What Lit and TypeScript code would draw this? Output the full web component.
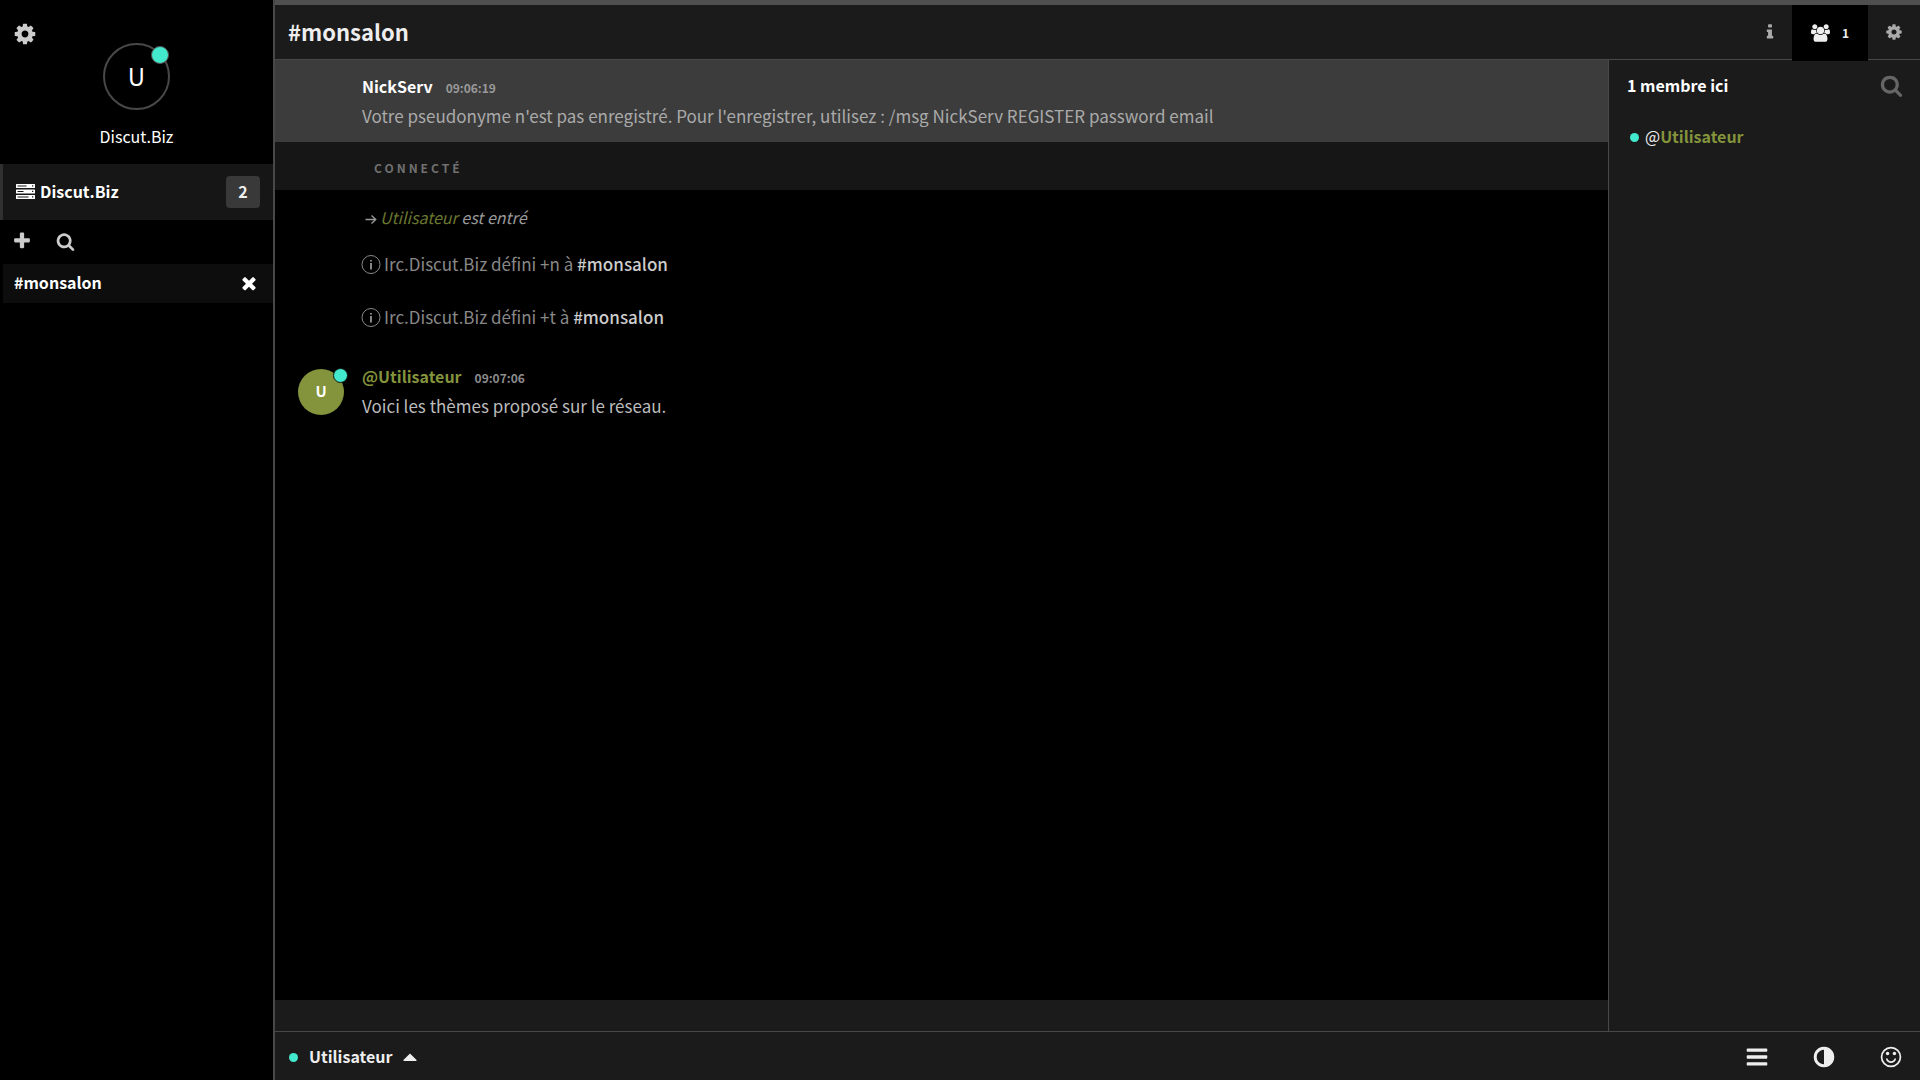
import { LitElement, html, svg, css, nothing } from "lit";
import { customElement, property } from "lit/decorators.js";

interface Glyph {
  box: string;
  ratio: number;
  body: unknown;
}

const square = "0 0 1792 1792";

const glyphs: Record<string, Glyph> = {
  cog: {
    box: square,
    ratio: 1,
    body: svg`<path d="M1152 896q0-106-75-181t-181-75-181 75-75 181 75 181 181 75 181-75 75-181zm512-109v222q0 12-8 23t-20 13l-185 28q-19 54-39 91 35 50 107 138 10 12 10 25t-9 23q-27 37-99 108t-94 71q-12 0-26-9l-138-108q-44 23-91 38-16 136-29 186-7 28-36 28h-222q-14 0-24.500-8.500t-11.500-21.500l-28-184q-49-16-90-37l-141 107q-10 9-25 9-14 0-25-11-126-114-165-168-7-10-7-23 0-12 8-23 15-21 51-66.500t54-70.500q-27-50-41-99l-183-27q-13-2-21-12.500t-8-23.500v-222q0-12 8-23t19-13l186-28q14-46 39-92-40-57-107-138-10-12-10-24 0-10 9-23 26-36 98.500-107.500t94.500-71.500q13 0 26 10l138 107q44-23 91-38 16-136 29-186 7-28 36-28h222q14 0 24.500 8.500t11.500 21.500l28 184q49 16 90 37l142-107q9-9 24-9 13 0 25 10 129 119 165 170 7 8 7 22 0 12-8 23-15 21-51 66.500t-54 70.500q26 50 41 98l183 28q13 2 21 12.500t8 23.500z"/>`,
  },
  search: {
    box: square,
    ratio: 1,
    body: svg`<path d="M1216 832q0-185-131.500-316.500t-316.500-131.500-316.500 131.500-131.500 316.500 131.500 316.500 316.500 131.500 316.500-131.500 131.500-316.500zm512 832q0 52-38 90t-90 38q-54 0-90-38l-343-342q-179 124-399 124-143 0-273.500-55.500t-225-150-150-225-55.500-273.500 55.500-273.500 150-225 225-150 273.500-55.500 273.500 55.500 225 150 150 225 55.500 273.500q0 220-124 399l343 343q37 37 37 90z"/>`,
  },
  plus: {
    box: square,
    ratio: 1,
    body: svg`<path d="M1600 736v192q0 40-28 68t-68 28h-416v416q0 40-28 68t-68 28h-192q-40 0-68-28t-28-68v-416h-416q-40 0-68-28t-28-68v-192q0-40 28-68t68-28h416v-416q0-40 28-68t68-28h192q40 0 68 28t28 68v416h416q40 0 68 28t28 68z"/>`,
  },
  times: {
    box: square,
    ratio: 1,
    body: svg`<path d="M1490 1322q0 40-28 68l-136 136q-28 28-68 28t-68-28l-294-294-294 294q-28 28-68 28t-68-28l-136-136q-28-28-28-68t28-68l294-294-294-294q-28-28-28-68t28-68l136-136q28-28 68-28t68 28l294 294 294-294q28-28 68-28t68 28l136 136q28 28 28 68t-28 68l-294 294 294 294q28 28 28 68z"/>`,
  },
  info: {
    box: square,
    ratio: 1,
    body: svg`<path d="M1216 1344v128q0 26-19 45t-45 19h-512q-26 0-45-19t-19-45v-128q0-26 19-45t45-19h64v-384h-64q-26 0-45-19t-19-45v-128q0-26 19-45t45-19h384q26 0 45 19t19 45v576h64q26 0 45 19t19 45zm-128-1152v192q0 26-19 45t-45 19h-256q-26 0-45-19t-19-45v-192q0-26 19-45t45-19h256q26 0 45 19t19 45z"/>`,
  },
  bars: {
    box: square,
    ratio: 1,
    body: svg`<path d="M1664 1344v128q0 26-19 45t-45 19h-1408q-26 0-45-19t-19-45v-128q0-26 19-45t45-19h1408q26 0 45 19t19 45zm0-512v128q0 26-19 45t-45 19h-1408q-26 0-45-19t-19-45v-128q0-26 19-45t45-19h1408q26 0 45 19t19 45zm0-512v128q0 26-19 45t-45 19h-1408q-26 0-45-19t-19-45v-128q0-26 19-45t45-19h1408q26 0 45 19t19 45z"/>`,
  },
  adjust: {
    box: square,
    ratio: 1,
    body: svg`<path d="M896 1440v-1088q-148 0-273 73t-198 198-73 273 73 273 198 198 273 73zm768-544q0 209-103 385.500t-279.500 279.500-385.500 103-385.500-103-279.500-279.500-103-385.500 103-385.500 279.500-279.500 385.500-103 385.500 103 279.500 279.500 103 385.500z"/>`,
  },
  smile: {
    box: square,
    ratio: 1,
    body: svg`<circle cx="896" cy="896" r="704" fill="none" stroke="currentColor" stroke-width="128"/><circle cx="640" cy="640" r="128"/><circle cx="1152" cy="640" r="128"/><path d="M1262 1075q-37 121-138 195t-228 74-228-74-138-195q-8-25 4-48.500t38-31.500q25-8 48.500 4t31.500 38q25 80 92.500 129.500t151.500 49.500 151.500-49.500 92.500-129.500q8-26 32-38t49-4 37 31.500 4 48.500z"/>`,
  },
  group: {
    box: "64 0 1920 1792",
    ratio: 1.0714,
    body: svg`<path d="M657 896q-162 5-265 128h-134q-82 0-138-40.500t-56-118.500q0-353 124-353 6 0 43.500 21t97.500 42.500 119 21.500q67 0 133-23-5 37-5 66 0 139 81 256zm1071 637q0 120-73 189.500t-194 69.500h-874q-121 0-194-69.500t-73-189.500q0-53 3.500-103.500t14-109 26.500-108.500 43-97.500 62-81 85.500-53.500 111.500-20q10 0 43 21.500t73 48 107 48 135 21.500 135-21.500 107-48 73-48 43-21.500q61 0 111.500 20t85.500 53.500 62 81 43 97.500 26.500 108.500 14 109 3.500 103.500zm-1024-1277q0 106-75 181t-181 75-181-75-75-181 75-181 181-75 181 75 75 181zm704 384q0 159-112.500 271.500t-271.500 112.500-271.500-112.500-112.500-271.500 112.500-271.500 271.500-112.500 271.500 112.500 112.500 271.500zm576 225q0 78-56 118.500t-138 40.500h-134q-103-123-265-128 81-117 81-256 0-29-5-66 66 23 133 23 59 0 119-21.500t97.500-42.500 43.500-21q124 0 124 353zm-128-609q0 106-75 181t-181 75-181-75-75-181 75-181 181-75 181 75 75 181z"/>`,
  },
  server: {
    box: "0 0 19 15",
    ratio: 1.2667,
    body: svg`<path fill-rule="evenodd" d="M.5 0h18q.5 0 .5.5v3q0 .5-.5.5H.5Q0 4 0 3.500v-3Q0 0 .5 0zM1.500 1.500v1h9v-1zM16 1.300v1.300h1.300V1.300zM.5 5.500h18q.5 0 .5.5v3q0 .5-.5.5H.5Q0 9.500 0 9V6q0-.5.5-.5zM1.500 7v1h6V7zM16 6.800v1.300h1.300V6.800zM.5 11h18q.5 0 .5.5v3q0 .5-.5.5H.5q-.5 0-.5-.5v-3q0-.5.5-.5zM1.500 12.500v1h11v-1zM16 12.300v1.300h1.300v-1.300z"/>`,
  },
  caret: {
    box: "0 0 14 8",
    ratio: 1.75,
    body: svg`<path d="M7 .4 13.600 7q.4.8-.6.9H1Q0 7.800.4 7z"/>`,
  },
  notice: {
    box: "0 0 20 20",
    ratio: 1,
    body: svg`<circle cx="10" cy="9.500" r="9" fill="none" stroke="currentColor" stroke-width="1"/><path d="M9 5h2v1.500H9zM9 8h2v6.500H9z"/>`,
  },
  arrow: {
    box: "0 0 12 12",
    ratio: 1,
    body: svg`<path d="M.5 7.500h10.500M6.500 3.500 10.800 7.500l-4.300 4" fill="none" stroke="currentColor" stroke-width="1.300"/>`,
  },
};

const icon = (name: string, height: number) => {
  const g = glyphs[name];
  return html`<svg
    viewBox=${g.box}
    width=${Math.round(height * g.ratio)}
    height=${height}
    fill="currentColor"
    aria-hidden="true"
  >${g.body}</svg>`;
};

const shared = css`
  :host {
    box-sizing: border-box;
  }
  *,
  *::before,
  *::after {
    box-sizing: border-box;
  }
  svg {
    display: block;
    flex: none;
  }
  button {
    display: flex;
    align-items: center;
    justify-content: center;
    margin: 0;
    padding: 0;
    border: 0;
    background: none;
    color: inherit;
    font: inherit;
    cursor: pointer;
  }
  a {
    color: inherit;
    text-decoration: none;
  }
  .label {
    padding-bottom: 2px;
  }
  .presence {
    flex: none;
    width: 9px;
    height: 9px;
    border-radius: 50%;
    background: #42e9cc;
  }
`;

@customElement("chat-sidebar")
export class ChatSidebar extends LitElement {
  static styles = [
    shared,
    css`
      :host {
        display: flex;
        flex-direction: column;
        width: 275px;
        flex: none;
        background: #000;
        border-right: 2px solid #484848;
      }
      .profile {
        position: relative;
        display: flex;
        flex-direction: column;
        align-items: center;
        gap: 15px;
        padding: 43px 0 16px;
        color: #fff;
      }
      .settings {
        position: absolute;
        left: 13px;
        top: 22px;
        color: #ccc;
      }
      .avatar {
        position: relative;
        display: flex;
        align-items: center;
        justify-content: center;
        width: 67px;
        height: 67px;
        border: 2px solid #484848;
        border-radius: 50%;
        font-size: 24px;
        line-height: 24px;
      }
      .status {
        position: absolute;
        right: -1px;
        top: 1px;
        width: 18px;
        height: 18px;
        border: 1px solid #555;
        border-radius: 50%;
        background: #42e9cc;
      }
      .identity {
        line-height: 23px;
      }
      .network {
        display: flex;
        align-items: center;
        gap: 5px;
        height: 56px;
        padding: 0 13px;
        border-left: 3px solid #303030;
        background: #161616;
        color: #fff;
        font-weight: 700;
      }
      .network svg {
        margin-bottom: 2px;
      }
      .network-name {
        flex: 1;
      }
      .count {
        display: grid;
        place-items: center;
        width: 34px;
        height: 32px;
        padding-bottom: 2px;
        border-radius: 4px;
        background: #393939;
        color: #eee;
      }
      .tools {
        display: flex;
        align-items: center;
        gap: 24px;
        height: 44px;
        padding: 0 12px 2px;
        color: #ccc;
      }
      .channel {
        display: flex;
        align-items: center;
        justify-content: space-between;
        height: 39px;
        margin-left: 3px;
        padding: 0 14px 2px 11px;
        background: #0d0d0d;
        color: #fff;
        font-weight: 700;
      }
    `,
  ];

  render() {
    return html`
      <div class="profile">
        <button class="settings" aria-label="Paramètres">${icon("cog", 24)}</button>
        <div class="avatar"><span class="label">U</span><span class="status"></span></div>
        <div class="identity">Discut.Biz</div>
      </div>
      <div class="network">
        ${icon("server", 15)}
        <a class="network-name label" href="#reseau">Discut.Biz</a>
        <span class="count">2</span>
      </div>
      <div class="tools">
        <button aria-label="Ajouter un salon">${icon("plus", 20)}</button>
        <button aria-label="Rechercher un salon">${icon("search", 19)}</button>
      </div>
      <div class="channel">
        <a class="label" href="#monsalon">#monsalon</a>
        <button aria-label="Fermer">${icon("times", 20)}</button>
      </div>
    `;
  }
}

@customElement("chat-header")
export class ChatHeader extends LitElement {
  static styles = [
    shared,
    css`
      :host {
        display: flex;
        height: 60px;
        flex: none;
        border-top: 5px solid #4f4f4f;
        border-bottom: 1px solid #484848;
        background: #1b1b1b;
        color: #eee;
      }
      .title {
        flex: 1;
        margin: 0;
        padding-left: 13px;
        font-size: 22px;
        line-height: 52px;
        font-weight: 700;
      }
      .actions {
        display: flex;
        color: #aaa;
      }
      .action {
        width: 52px;
      }
      .narrow {
        width: 46px;
        padding-left: 1px;
      }
      .people {
        position: relative;
        z-index: 1;
        gap: 12px;
        width: 76px;
        height: 56px;
        background: #000;
        color: #eee;
        font-size: 12px;
        font-weight: 700;
      }
    `,
  ];

  render() {
    return html`
      <h1 class="title">#monsalon</h1>
      <nav class="actions">
        <button class="narrow" aria-label="Informations">${icon("info", 18)}</button>
        <button class="people" aria-label="Membres">${icon("group", 18)}<span>1</span></button>
        <button class="action" aria-label="Réglages du salon">${icon("cog", 18)}</button>
      </nav>
    `;
  }
}

@customElement("chat-message")
export class ChatMessage extends LitElement {
  @property() nick = "";
  @property() time = "";
  @property() text = "";
  @property() initial = "";
  @property({ type: Boolean, reflect: true }) highlight = false;

  static styles = [
    shared,
    css`
      :host {
        display: flex;
        padding: 11px 23px;
        color: #bbb;
      }
      :host([highlight]) {
        background: #3c3c3c;
        color: #aaa;
      }
      .gutter {
        flex: none;
        width: 64px;
        padding-top: 8px;
      }
      .avatar {
        position: relative;
        display: grid;
        place-items: center;
        width: 46px;
        height: 46px;
        padding-bottom: 2px;
        border-radius: 50%;
        background: #84943c;
        color: #fff;
        font-size: 15px;
        font-weight: 700;
      }
      .status {
        position: absolute;
        right: -4px;
        top: -1px;
        width: 15px;
        height: 15px;
        border: 1px solid #111;
        border-radius: 50%;
        background: #42e9cc;
      }
      .meta {
        display: flex;
        align-items: baseline;
        gap: 13px;
        line-height: 30px;
      }
      .nick {
        color: #84943c;
        font-weight: 700;
      }
      :host([highlight]) .nick {
        color: #fff;
      }
      .time {
        color: #8c8c8c;
        font-size: 12px;
        line-height: 20px;
        font-weight: 700;
      }
      :host([highlight]) .time {
        color: #999;
      }
      .text {
        margin: 0;
        font-size: 17px;
        line-height: 30px;
      }
    `,
  ];

  render() {
    return html`
      <div class="gutter">
        ${this.initial
          ? html`<div class="avatar">${this.initial}<span class="status"></span></div>`
          : nothing}
      </div>
      <div>
        <div class="meta">
          <a class="nick" href="#pseudo">${this.nick}</a>
          <time class="time">${this.time}</time>
        </div>
        <p class="text">${this.text}</p>
      </div>
    `;
  }
}

@customElement("chat-log")
export class ChatLog extends LitElement {
  static styles = [
    shared,
    css`
      :host {
        display: flex;
        flex-direction: column;
        flex: 1;
        min-width: 0;
        background: #000;
      }
      .divider {
        height: 48px;
        padding-left: 99px;
        background: #161616;
        color: #707070;
        font-size: 12px;
        line-height: 52px;
        letter-spacing: 3px;
        font-weight: 700;
        text-transform: uppercase;
      }
      .event {
        display: flex;
        align-items: center;
        gap: 3px;
        padding-left: 86px;
        height: 53px;
        color: #888;
        font-size: 17px;
      }
      .join {
        height: 40px;
        margin-top: 8px;
        padding-left: 90px;
        font-size: 16px;
        font-style: italic;
        color: #999;
      }
      .events {
        margin-bottom: 6px;
      }
      .who {
        color: #6a782f;
      }
      .room {
        color: #ccc;
        font-weight: 500;
      }
      .strip {
        height: 31px;
        margin-top: auto;
        background: #1b1b1b;
      }
    `,
  ];

  private mode(flag: string) {
    return html`<div class="event">
      ${icon("notice", 20)}
      <span class="label">Irc.Discut.Biz défini ${flag} à <a class="room" href="#monsalon">#monsalon</a></span>
    </div>`;
  }

  render() {
    return html`
      <chat-message
        highlight
        nick="NickServ"
        time="09:06:19"
        text="Votre pseudonyme n'est pas enregistré. Pour l'enregistrer, utilisez : /msg NickServ REGISTER password email"
      ></chat-message>
      <div class="divider">Connecté</div>
      <div class="events">
        <div class="event join">
          ${icon("arrow", 12)}
          <span class="label"><span class="who">Utilisateur</span> est entré</span>
        </div>
        ${["+n", "+t"].map((f) => this.mode(f))}
      </div>
      <chat-message
        initial="U"
        nick="@Utilisateur"
        time="09:07:06"
        text="Voici les thèmes proposé sur le réseau."
      ></chat-message>
      <div class="strip"></div>
    `;
  }
}

@customElement("chat-members")
export class ChatMembers extends LitElement {
  static styles = [
    shared,
    css`
      :host {
        display: block;
        width: 312px;
        flex: none;
        border-left: 1px solid #484848;
        background: #1b1b1b;
      }
      .head {
        display: flex;
        align-items: center;
        justify-content: space-between;
        height: 51px;
        padding: 0 17px 0 18px;
        color: #fff;
        font-weight: 700;
      }
      .find {
        color: #666;
      }
      .list {
        margin: 0;
        padding: 9px 21px;
        list-style: none;
      }
      .member {
        display: flex;
        align-items: center;
        gap: 6px;
        height: 34px;
      }
      .mode {
        color: #eee;
      }
      .name {
        color: #84943c;
        font-weight: 700;
      }
    `,
  ];

  render() {
    return html`
      <div class="head">
        <span class="label">1 membre ici</span>
        <button class="find" aria-label="Rechercher un membre">${icon("search", 23)}</button>
      </div>
      <ul class="list">
        <li class="member">
          <span class="presence"></span>
          <a class="label" href="#pseudo"><span class="mode">@</span><span class="name">Utilisateur</span></a>
        </li>
      </ul>
    `;
  }
}

@customElement("chat-footer")
export class ChatFooter extends LitElement {
  static styles = [
    shared,
    css`
      :host {
        display: flex;
        align-items: center;
        justify-content: space-between;
        height: 49px;
        flex: none;
        padding: 2px 17px 0 14px;
        border-top: 1px solid #484848;
        background: #1b1b1b;
        color: #eee;
      }
      .self {
        gap: 11px;
        font-weight: 700;
      }
      .actions {
        display: flex;
        gap: 43px;
      }
    `,
  ];

  render() {
    return html`
      <button class="self">
        <span class="presence"></span><span class="label">Utilisateur</span>${icon("caret", 8)}
      </button>
      <div class="actions">
        <button aria-label="Commandes">${icon("bars", 24)}</button>
        <button aria-label="Couleurs">${icon("adjust", 24)}</button>
        <button aria-label="Émoticônes">${icon("smile", 24)}</button>
      </div>
    `;
  }
}

@customElement("app-root")
export class AppRoot extends LitElement {
  static styles = [
    shared,
    css`
      :host {
        display: flex;
        min-height: 100vh;
        background: #000;
        font-family: "Noto Sans CJK SC", "Open Sans", sans-serif;
        font-size: 16px;
        line-height: 24px;
      }
      .main {
        display: flex;
        flex-direction: column;
        flex: 1;
        min-width: 0;
      }
      .content {
        display: flex;
        flex: 1;
      }
    `,
  ];

  render() {
    return html`
      <chat-sidebar></chat-sidebar>
      <main class="main">
        <chat-header></chat-header>
        <div class="content">
          <chat-log></chat-log>
          <chat-members></chat-members>
        </div>
        <chat-footer></chat-footer>
      </main>
    `;
  }
}
